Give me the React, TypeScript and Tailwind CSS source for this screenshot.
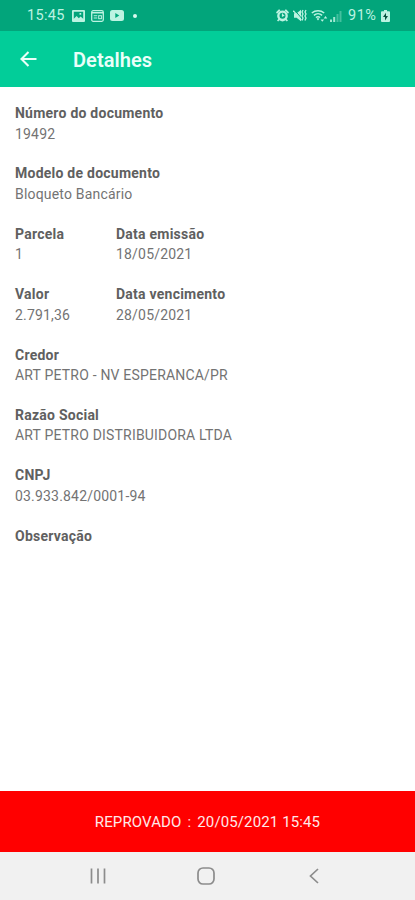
import type { ReactNode } from 'react'

interface FieldData {
  label: string
  value: string
}

const ROWS: FieldData[][] = [
  [{ label: 'Número do documento', value: '19492' }],
  [{ label: 'Modelo de documento', value: 'Bloqueto Bancário' }],
  [
    { label: 'Parcela', value: '1' },
    { label: 'Data emissão', value: '18/05/2021' },
  ],
  [
    { label: 'Valor', value: '2.791,36' },
    { label: 'Data vencimento', value: '28/05/2021' },
  ],
  [{ label: 'Credor', value: 'ART PETRO - NV ESPERANCA/PR' }],
  [{ label: 'Razão Social', value: 'ART PETRO DISTRIBUIDORA LTDA' }],
  [{ label: 'CNPJ', value: '03.933.842/0001-94' }],
  [{ label: 'Observação', value: '' }],
]

function Icon({ className, box, children }: { className: string; box: string; children: ReactNode }) {
  return (
    <svg className={`block shrink-0 ${className}`} viewBox={box} fill="currentColor">
      {children}
    </svg>
  )
}

function StatusBar() {
  return (
    <div className="flex h-[31px] items-center bg-[#02a57b] pl-[27px] pr-[25px] text-[#bdf3e2]">
      <span className="w-[45px] whitespace-nowrap pt-[2px] text-[14.5px] leading-none tracking-[0.3px]">15:45</span>

      {/* Picture */}
      <Icon className="h-3 w-[13px]" box="0 0 13 12">
        <path fillRule="evenodd" d="M1 0h11a1 1 0 0 1 1 1v10a1 1 0 0 1-1 1H1a1 1 0 0 1-1-1V1a1 1 0 0 1 1-1zm.8 1.800v7L4.600 6l2.200 2.200L8.600 6.500l2.600 2.300v-7zM7.500 3h1.700v1.700H7.500z" />
      </Icon>
      {/* News widget */}
      <Icon className="ml-[6px] h-3 w-[13px]" box="0 0 13 12">
        <rect x=".7" y=".7" width="11.600" height="10.600" rx="1.500" fill="none" stroke="currentColor" strokeWidth="1.300" />
        <path d="M1 2h11v1.500H1zM2.700 5.300h3.600v1H2.700zM2.700 7.500h3.600v1H2.700z" />
        <rect x="7.700" y="5.700" width="2.700" height="3" fill="none" stroke="currentColor" strokeWidth="1" />
      </Icon>
      {/* Video */}
      <Icon className="ml-[6px] h-[11px] w-[14px]" box="0 0 14 11">
        <path fillRule="evenodd" d="M2.500 0h9A2.500 2.500 0 0 1 14 2.500v6a2.500 2.500 0 0 1-2.500 2.500h-9A2.500 2.500 0 0 1 0 8.500v-6A2.500 2.500 0 0 1 2.500 0zM5.300 3v5l4-2.500z" />
      </Icon>
      <span className="ml-[9px] size-1 rounded-full bg-[#d8faef]" />

      <div className="ml-auto flex items-center">
        {/* Alarm */}
        <Icon className="h-[13px] w-[13px]" box="0 0 13 13">
          <path fillRule="evenodd" d="M6.500 1.500a5.300 5.300 0 0 1 4.200 8.500l1.300 1.600-1.200 1-1.200-1.300a5.300 5.300 0 0 1-6.200 0l-1.200 1.300-1.200-1L2.300 10a5.300 5.300 0 0 1 4.200-8.500zm0 2.300a3 3 0 0 0 0 6 3 3 0 0 0 0-6z" />
          <path d="M6.500 4.500V7l1.700-.9" fill="none" stroke="currentColor" strokeWidth="1.200" />
          <path d="M0 3.300 3 .3l1.500 1L1 4.800zM13 3.300 10 .3l-1.500 1L12 4.800z" />
        </Icon>
        {/* Vibrate */}
        <Icon className="ml-[4px] h-[13px] w-[14px]" box="0 0 14 13">
          <path d="M1 4.300h2.600L8 .8v11.400L3.600 8.700H1z" />
          <path d="M1.500 1 9 9.800" stroke="#02a57b" strokeWidth="1" />
          <path d="M.3 1.700 8.300 11.200" stroke="currentColor" strokeWidth="1.300" />
          <path d="m10 1-1 2 1 2-1 2 1 2-1 2.500M13 1l-1 2 1 2-1 2 1 2-1 2.500" fill="none" stroke="currentColor" strokeWidth="1.300" />
        </Icon>
        {/* Wi-Fi with transfer arrows */}
        <Icon className="ml-[4px] h-[13px] w-[17px]" box="0 0 17 13">
          <path d="M.8 4a9.500 9.500 0 0 1 12.400 0M2.900 6.300a6.400 6.400 0 0 1 8.200 0M4.900 8.500a3.500 3.500 0 0 1 4.200 0" fill="none" stroke="currentColor" strokeWidth="1.500" />
          <path d="m5.600 9.800 1.400-.7 1.400.7L7 11.500zM9.500 10.500h3.600l-1.800 2.300zM12.700 9.500h3.600l-1.800-2.500z" />
        </Icon>
        {/* Signal */}
        <Icon className="ml-[2px] h-[12px] w-[12px]" box="0 0 12 12">
          <path d="M0 9.500h2V12H0zM3.200 7h2v5h-2z" opacity=".85" />
          <path d="M6.500 4h2v8h-2zM9.500 1h2v11h-2z" opacity=".35" />
        </Icon>
        <span className="ml-[6px] w-[30px] whitespace-nowrap pt-[2px] text-[14.5px] leading-none tracking-[0.5px]">91%</span>
        {/* Battery */}
        <Icon className="ml-[3px] h-[12px] w-[9px]" box="0 0 9 12">
          <path d="M3 0h3v1.300h2a1 1 0 0 1 1 1V11a1 1 0 0 1-1 1H1a1 1 0 0 1-1-1V2.300a1 1 0 0 1 1-1h2z" />
          <path d="M5 2.700 2 7h2v3.500L7 6H5z" fill="#08533f" />
        </Icon>
      </div>
    </div>
  )
}

function Field({ label, value }: FieldData) {
  return (
    <div className="whitespace-nowrap">
      <p className="text-[14px] font-bold leading-[20.500px] tracking-[0.240px] text-[#606060]">{label}</p>
      <p className="text-[14px] leading-[20.900px] tracking-[0.190px] text-[#737373]">{value}</p>
    </div>
  )
}

export default function App() {
  return (
    <div className="flex h-[900px] w-[415px] flex-col overflow-hidden bg-white font-['Roboto',sans-serif]">
      <StatusBar />

      <header className="flex h-14 items-center bg-[#02cd99] pl-5 text-[#eafff9]">
        <svg className="mb-px block h-4 w-[17px]" viewBox="0 0 17 16" fill="none" stroke="currentColor" strokeWidth="2.100">
          <path d="M16.500 8H1.500M8.500 1l-7 7 7 7" />
        </svg>
        <h1 className="ml-9 pt-[2px] text-[20px] font-semibold leading-none tracking-[0.050px]">Detalhes</h1>
      </header>

      <main className="flex-1 px-[15px] pt-[16px]">
        {ROWS.map(row => (
          <div key={row[0].label} className="grid h-[60.380px] grid-cols-[101px_1fr]">
            {row.map(field => (
              <Field key={field.label} {...field} />
            ))}
          </div>
        ))}
      </main>

      <div className="flex h-[61px] items-center justify-center gap-[6px] whitespace-nowrap bg-[#ff0000] pt-[2px] text-[15px] tracking-[0.120px] text-[#ffe9e9]">
        <span>REPROVADO</span>
        <span>:</span>
        <span>20/05/2021 15:45</span>
      </div>

      <nav className="flex h-12 items-center bg-[#f1f1f1] pl-[90px] text-[#8c8c8c]">
        <svg className="block h-4 w-4" viewBox="0 0 16 16" stroke="currentColor" strokeWidth="1.700">
          <path d="M1.500 .5v15M8 .5v15M14.500 .5v15" />
        </svg>
        <svg className="ml-[91px] block h-[18px] w-[18px]" viewBox="0 0 18 18" fill="none" stroke="currentColor" strokeWidth="1.700">
          <rect x="1" y="1" width="16" height="16" rx="5" />
        </svg>
        <svg className="ml-[94px] block h-4 w-[10px]" viewBox="0 0 10 16" fill="none" stroke="currentColor" strokeWidth="1.700">
          <path d="M9 1 1.500 8 9 15" />
        </svg>
      </nav>
    </div>
  )
}
